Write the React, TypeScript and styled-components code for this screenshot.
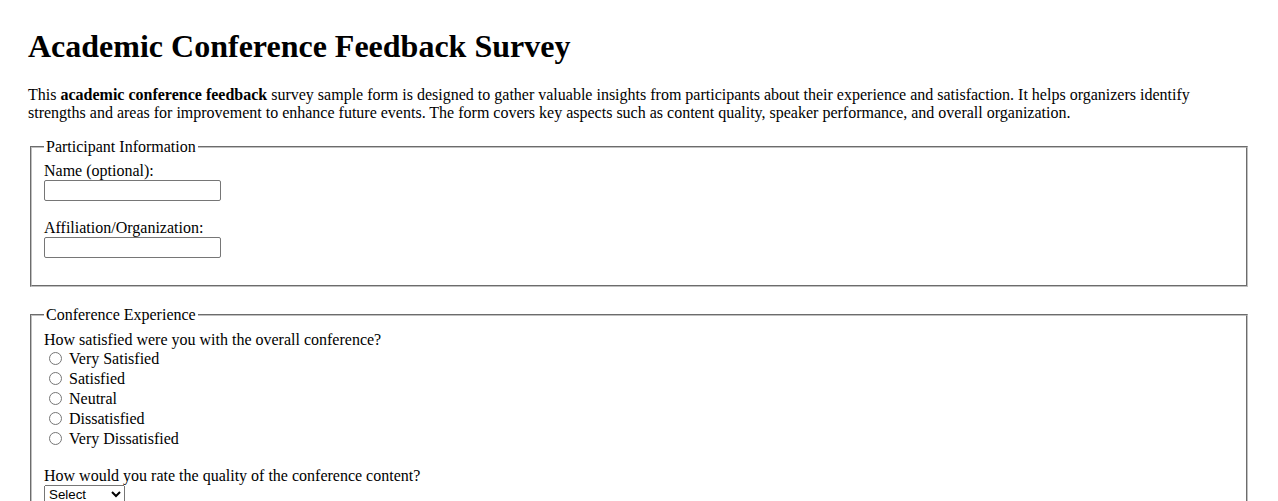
import React, { useState } from "react";
import styled, { createGlobalStyle } from "styled-components";

const GlobalStyle = createGlobalStyle`
	html, body {
		margin: 0;
		padding: 0;
		background: #ffffff;
	}
	body {
		font-family: "Liberation Serif", "Times New Roman", serif;
		font-size: 16px;
		color: #000000;
	}
`;

const satisfactionOptions: string[] = [
	"Very Satisfied",
	"Satisfied",
	"Neutral",
	"Dissatisfied",
	"Very Dissatisfied",
];

const qualityOptions: string[] = ["Excellent", "Good", "Average", "Poor"];

function App(): JSX.Element {
	const [name, setName] = useState<string>("");
	const [affiliation, setAffiliation] = useState<string>("");
	const [satisfaction, setSatisfaction] = useState<string>("");
	const [quality, setQuality] = useState<string>("");

	return (
		<>
			<GlobalStyle />
			<Page>
				<Title>Academic Conference Feedback Survey</Title>
				<Intro>
					This <b>academic conference feedback</b> survey sample form is
					designed to gather valuable insights from participants about their
					experience and satisfaction. It helps organizers identify strengths
					and areas for improvement to enhance future events. The form covers
					key aspects such as content quality, speaker performance, and overall
					organization.
				</Intro>
				<form onSubmit={(e) => e.preventDefault()}>
					<Section>
						<Legend>Participant Information</Legend>
						<Field>
							<Label htmlFor="name">Name (optional):</Label>
							<TextInput
								id="name"
								type="text"
								value={name}
								onChange={(e) => setName(e.target.value)}
							/>
						</Field>
						<Field $last>
							<Label htmlFor="affiliation">Affiliation/Organization:</Label>
							<TextInput
								id="affiliation"
								type="text"
								value={affiliation}
								onChange={(e) => setAffiliation(e.target.value)}
							/>
						</Field>
					</Section>

					<Section $top={6.6}>
						<Legend>Conference Experience</Legend>
						<Field>
							<Question>How satisfied were you with the overall conference?</Question>
							{satisfactionOptions.map((opt) => (
								<RadioRow key={opt}>
									<Radio
										type="radio"
										name="satisfaction"
										value={opt}
										checked={satisfaction === opt}
										onChange={() => setSatisfaction(opt)}
									/>
									{opt}
								</RadioRow>
							))}
						</Field>
						<Field $last>
							<Question>How would you rate the quality of the conference content?</Question>
							<Select value={quality} onChange={(e) => setQuality(e.target.value)}>
								<option value="">Select</option>
								{qualityOptions.map((q) => (
									<option key={q} value={q}>
										{q}
									</option>
								))}
							</Select>
						</Field>
					</Section>
				</form>
			</Page>
		</>
	);
}

const Page = styled.div`
	padding: 28px 28px 0 28px;
	height: 473px;
	overflow: hidden;
`;

const Title = styled.h1`
	margin: 0 0 21.44px 0;
	font-size: 32px;
	font-weight: bold;
	line-height: normal;
`;

const Intro = styled.p`
	margin: 0 0 16px 0;
	line-height: normal;
`;

const Section = styled.fieldset<{ $top?: number }>`
	margin: 0 2px 19px 2px;
	padding: ${(p) => p.$top ?? 5.6}px 12px 10px 12px;
	border: 2px groove #c0c0c0;
	min-width: 0;
`;

const Legend = styled.legend`
	padding: 0 2px;
`;

const Field = styled.div<{ $last?: boolean }>`
	margin-bottom: ${(p) => (p.$last ? "17px" : "18px")};
`;

const Label = styled.label`
	display: block;
	line-height: normal;
`;

const Question = styled.div`
	line-height: normal;
`;

const TextInput = styled.input`
	display: block;
	box-sizing: border-box;
	width: 177px;
	height: 21px;
	margin: 0;
	padding: 1px 2px;
	border: 1px solid #767676;
	border-radius: 2px;
	font-family: "Liberation Sans", Arial, sans-serif;
	font-size: 13.33px;
`;

const RadioRow = styled.label`
	display: flex;
	align-items: center;
	height: 20px;
`;

const Radio = styled.input`
	width: 13px;
	height: 13px;
	margin: 0 7px 0 5px;
`;

const Select = styled.select`
	display: block;
	width: 81px;
	height: 19px;
	margin: 0;
	font-family: "Liberation Sans", Arial, sans-serif;
	font-size: 13.33px;
`;

export default App;
